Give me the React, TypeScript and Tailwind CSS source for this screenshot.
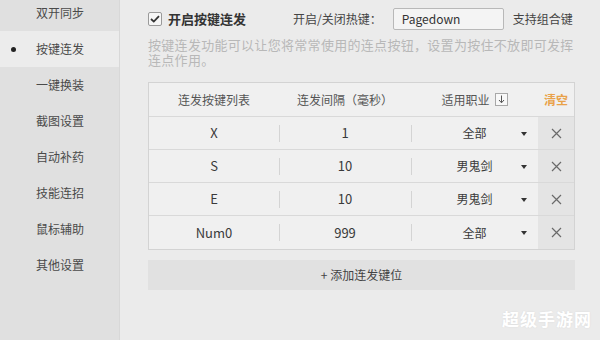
import { useState } from "react";

const menuItems = [
  "双开同步",
  "按键连发",
  "一键换装",
  "截图设置",
  "自动补药",
  "技能连招",
  "鼠标辅助",
  "其他设置",
];

interface KeyRow {
  key: string;
  interval: string;
  job: string;
}

const initialRows: KeyRow[] = [
  { key: "X", interval: "1", job: "全部" },
  { key: "S", interval: "10", job: "男鬼剑" },
  { key: "E", interval: "10", job: "男鬼剑" },
  { key: "Num0", interval: "999", job: "全部" },
];

function CloseIcon() {
  return (
    <svg width="11" height="11" viewBox="0 0 11 11" fill="none">
      <path d="M1 1L10 10M10 1L1 10" stroke="#6a6a6a" strokeWidth="1.2" />
    </svg>
  );
}

function Sidebar({ active }: { active: number }) {
  return (
    <div className="w-[120px] shrink-0 bg-[#e0e0e0] border-r border-[#d8d8d8]">
      <div className="-mt-[5px] flex flex-col">
        {menuItems.map((item, i) => (
          <div
            key={item}
            className={`relative flex h-[36px] items-center pl-[36px] text-[12px] text-[#4a4a4a] ${
              i === active ? "bg-[#ececec]" : ""
            }`}
          >
            {i === active && (
              <span className="absolute left-[11px] h-[5px] w-[5px] rounded-full bg-[#222]" />
            )}
            {item}
          </div>
        ))}
      </div>
    </div>
  );
}

export default function App() {
  const [rows, setRows] = useState<KeyRow[]>(initialRows);

  return (
    <div
      className="flex h-[340px] w-[600px] overflow-hidden bg-[#ebebeb]"
      style={{ fontFamily: '"Noto Sans CJK SC", "Noto Sans", sans-serif' }}
    >
      <Sidebar active={1} />

      <div className="relative flex-1 pl-[28px] pr-[25px]">
        {/* top options */}
        <div className="mt-[8px] flex h-[22px] items-center">
          <div className="flex w-[145px] items-center">
            <span className="flex h-[14px] w-[14px] items-center justify-center rounded-[2px] border border-[#9a9a9a] bg-[#f6f6f6]">
              <svg width="10" height="8" viewBox="0 0 10 8" fill="none">
                <path d="M1 4L3.8 6.6L9 1.2" stroke="#333" strokeWidth="1.8" />
              </svg>
            </span>
            <span className="ml-[6px] text-[13px] font-bold text-[#333]">开启按键连发</span>
          </div>
          <span className="text-[12px] text-[#444]">开启/关闭热键：</span>
          <div className="ml-[11px] flex h-[22px] w-[111px] items-center rounded-[2px] border border-[#b8b8b8] bg-[#f4f4f4] pl-[8px] text-[12px] text-[#333]">
            Pagedown
          </div>
          <span className="ml-[9px] text-[12px] text-[#444]">支持组合键</span>
        </div>

        <p className="mt-[7px] text-[13px] leading-[15px] tracking-[0.3px] text-[#b8b8b8]">
          按键连发功能可以让您将常常使用的连点按钮，设置为按住不放即可发挥
          <br />
          连点作用。
        </p>

        {/* key table */}
        <div className="mt-[15px] w-[427px] border border-[#d3d3d3] bg-[#f0f0f0]">
          <div className="grid h-[34px] grid-cols-[130px_132px_127px_1fr] items-center border-b border-[#d9d9d9] text-[12px] text-[#555]">
            <span className="text-center">连发按键列表</span>
            <span className="text-center">连发间隔（毫秒）</span>
            <span className="flex items-center justify-center gap-[5px]">
              适用职业
              <span className="flex h-[13px] w-[13px] items-center justify-center border border-[#a8a8a8] bg-[#f8f8f8]">
                <svg width="7" height="9" viewBox="0 0 7 9" fill="none">
                  <path d="M3.5 0.5V7.5M1 5L3.5 7.8L6 5" stroke="#555" strokeWidth="1" />
                </svg>
              </span>
            </span>
            <button
              onClick={() => setRows([])}
              className="text-center text-[12px] font-bold text-[#e9a24a]"
            >
              清空
            </button>
          </div>

          {rows.map((row, i) => (
            <div
              key={row.key}
              className={`grid h-[33px] grid-cols-[130px_132px_127px_1fr] text-[13px] text-[#3a3a3a] ${
                i < rows.length - 1 ? "border-b border-[#d9d9d9]" : ""
              }`}
            >
              <div className="flex items-center justify-center">{row.key}</div>
              <div className="relative flex items-center justify-center">
                <span className="absolute left-0 top-[8px] h-[17px] w-px bg-[#d4d4d4]" />
                {row.interval}
              </div>
              <div className="relative flex items-center justify-center text-[12px]">
                <span className="absolute left-0 top-[8px] h-[17px] w-px bg-[#d4d4d4]" />
                {row.job}
                <span className="absolute right-[11px] top-[15px] h-0 w-0 border-x-[3.5px] border-t-[4px] border-x-transparent border-t-[#333]" />
              </div>
              <button
                onClick={() => setRows(rows.filter((_, j) => j !== i))}
                className="flex items-center justify-center bg-[#e4e4e4]"
              >
                <CloseIcon />
              </button>
            </div>
          ))}
        </div>

        <button className="mt-[10px] flex h-[30px] w-[427px] items-center justify-center bg-[#e1e1e1] text-[12px] text-[#444]">
          + 添加连发键位
        </button>

        <span className="absolute bottom-[9px] right-[8px] text-[17px] font-bold tracking-[1px] text-white [text-shadow:0_0_2px_rgba(0,0,0,0.08)]">
          超级手游网
        </span>
      </div>
    </div>
  );
}
